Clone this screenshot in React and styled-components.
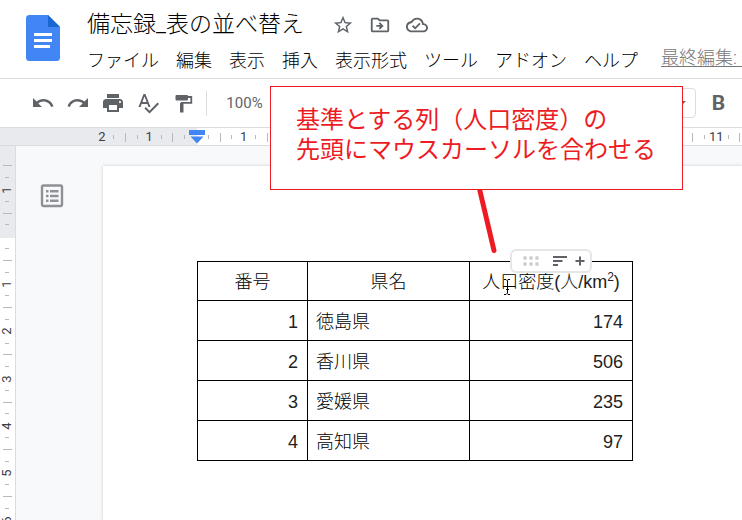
import React from "react";
import styled, { createGlobalStyle } from "styled-components";
import {
  MdUndo,
  MdRedo,
  MdPrint,
  MdSpellcheck,
  MdStarBorder,
  MdOutlineDriveFileMove,
  MdOutlineCloudDone,
  MdArrowDropDown,
} from "react-icons/md";

const colors = {
  text: "#000",
  icon: "#5f6368",
  line: "#dadce0",
  margin: "#e8eaed",
  canvas: "#f8f9fb",
  tick: "#b6b9be",
  blue: "#4285f4",
  red: "#ed1c24",
};

const fonts = {
  ui: `Roboto, "Noto Sans CJK JP", sans-serif`,
  doc: `"Liberation Sans", "Noto Sans CJK JP", sans-serif`,
};

const GlobalStyle = createGlobalStyle`
  * {
    box-sizing: border-box;
  }
  body {
    margin: 0;
    background: #fff;
    color: ${colors.text};
    font-family: ${fonts.ui};
    font-weight: 300;
  }
  button {
    padding: 0;
    border: 0;
    background: none;
    color: inherit;
    font: inherit;
    cursor: pointer;
  }
  svg {
    display: block;
    flex-shrink: 0;
  }
`;

const Container = styled.div`
  position: relative;
  display: flex;
  flex-direction: column;
  height: 100vh;
  overflow: hidden;
`;

const Header = styled.header`
  display: flex;
  flex-shrink: 0;
  gap: 27px;
  padding: 8px 0 0 26px;
  border-bottom: 1px solid ${colors.line};
`;

const LogoLink = styled.a`
  padding-top: 7px;
`;

const HeaderMain = styled.div`
  flex: 1;
  min-width: 0;
`;

const TitleRow = styled.div`
  display: flex;
  align-items: center;
  height: 34px;
`;

const Title = styled.h1`
  margin: 0 28px 0 0;
  font-size: 23px;
  font-weight: 300;
  line-height: 34px;
  white-space: nowrap;
`;

const TitleActions = styled.div`
  display: flex;
  align-items: center;
  gap: 15px;
  color: ${colors.icon};
`;

const MenuBar = styled.nav`
  display: flex;
  gap: 17px;
  height: 36px;
  padding-top: 1px;
  font-size: 18px;
  line-height: 36px;
  white-space: nowrap;
`;

const LastEdit = styled.a`
  margin-left: 6px;
  color: #777;
  line-height: 30px;
  text-underline-offset: 2px;
`;

const Toolbar = styled.div`
  display: flex;
  flex-shrink: 0;
  align-items: center;
  height: 49px;
  padding-left: 25px;
  border-bottom: 1px solid ${colors.line};
  color: ${colors.icon};
`;

const ToolButton = styled.button`
  display: flex;
  align-items: center;
  justify-content: center;
  width: 35px;
  height: 32px;
`;

const BoldButton = styled(ToolButton)`
  margin-left: 5px;
  font-size: 21px;
  font-weight: 700;
`;

const Separator = styled.div`
  width: 1px;
  height: 25px;
  margin: 0 18px 0 6px;
  background: ${colors.line};
`;

const ZoomButton = styled(ToolButton)`
  width: 39px;
  font-size: 15px;
  font-weight: 400;
`;

const FontBox = styled.div`
  display: flex;
  align-items: center;
  justify-content: flex-end;
  width: 401px;
  height: 30px;
  margin-left: 31px;
  padding-right: 2px;
  border: 1px solid ${colors.line};
  border-radius: 4px;
`;

const RulerBar = styled.div`
  flex-shrink: 0;
  height: 18px;
  padding-left: 96px;
  overflow: hidden;
  border-bottom: 1px solid ${colors.line};
  background: linear-gradient(90deg, ${colors.margin} 197px, #fff 197px);
`;

const RulerScale = styled.div`
  display: grid;
  grid-template-columns: repeat(160, 1fr);
  place-items: center;
  width: 1890px;
  height: 18px;
`;

const SideRuler = styled.div`
  flex-shrink: 0;
  width: 16px;
  padding: 14px 1px 0 0;
  overflow: hidden;
  border-right: 1px solid ${colors.line};
  background: linear-gradient(${colors.margin} 92px, #fff 92px);
`;

const SideScale = styled.div`
  display: grid;
  grid-template-rows: repeat(160, 1fr);
  place-items: center;
  height: 1890px;
`;

const Tick = styled.span`
  width: ${({ $side, $long }) => ($side ? ($long ? 9 : 4) : 1)}px;
  height: ${({ $side, $long }) => ($side ? 1 : $long ? 9 : 4)}px;
  background: ${colors.tick};
`;

const RulerLabel = styled.span`
  display: flex;
  align-items: center;
  justify-content: center;
  width: 12px;
  height: 12px;
  color: #3c4043;
  font-size: 13px;
  font-weight: 400;
  line-height: 12px;
  transform: ${({ $side }) => ($side ? "rotate(-90deg)" : "none")};
`;

const Workspace = styled.div`
  display: flex;
  flex: 1;
  min-height: 0;
`;

const Canvas = styled.main`
  display: flex;
  flex: 1;
  min-width: 0;
  padding-top: 20px;
  background: ${colors.canvas};
`;

const OutlineRail = styled.div`
  width: 87px;
  padding: 18px 0 0 24px;
`;

const Page = styled.article`
  flex: 1;
  min-width: 0;
  padding: 95px 0 0 94px;
  background: #fff;
  box-shadow: 0 0 3px rgba(60, 64, 67, 0.25);
`;

const DataTable = styled.table`
  width: 436px;
  border-collapse: collapse;
  table-layout: fixed;
  font-family: ${fonts.doc};
  font-size: 18px;
  line-height: 23px;
`;

const Col = styled.col`
  width: ${({ $width }) => $width}px;
`;

const Cell = styled.td`
  height: 40px;
  padding: 4px 8px 0;
  border: 1px solid #000;
  text-align: ${({ $align }) => $align || "left"};
  white-space: nowrap;
`;

const NumberCell = styled(Cell)`
  padding-right: 9px;
  color: #222;
`;

const HeadCell = styled(Cell)`
  position: relative;
  height: 39px;
  padding-top: 2px;
  font-weight: 300;
`;

const Unit = styled.span`
  color: #222;
`;

const Sup = styled.sup`
  font-size: 12px;
  line-height: 0;
`;

const ColumnTools = styled.div`
  position: absolute;
  top: -13px;
  left: 40px;
  display: flex;
  align-items: center;
  width: 82px;
  height: 24px;
  padding-left: 11px;
  border: 2px solid #e6e6e8;
  border-radius: 6px;
  background: #fff;
  color: ${colors.icon};
`;

const ColumnButton = styled.button`
  margin-right: ${({ $gap }) => $gap || 0}px;
`;

const TextCursor = styled.svg`
  position: absolute;
  top: 17px;
  left: 33px;
`;

const Callout = styled.aside`
  position: absolute;
  top: 86px;
  left: 270px;
  padding: 16px 26px 26px 25px;
  border: 1px solid ${colors.red};
  background: #fff;
`;

const CalloutText = styled.p`
  margin: 0;
  color: ${colors.red};
  font-family: "Noto Sans CJK JP", sans-serif;
  font-size: 24px;
  font-weight: 400;
  line-height: 30px;
  white-space: nowrap;
`;

const CalloutPointer = styled.svg`
  position: absolute;
  top: 100%;
  left: 204px;
`;

const menus = [
  "ファイル",
  "編集",
  "表示",
  "挿入",
  "表示形式",
  "ツール",
  "アドオン",
  "ヘルプ",
];

const rows = [
  { id: 1, name: "徳島県", density: 174 },
  { id: 2, name: "香川県", density: 506 },
  { id: 3, name: "愛媛県", density: 235 },
  { id: 4, name: "高知県", density: 97 },
];

const DocsLogo = () => (
  <svg width="34" height="46" viewBox="0 0 34 46">
    <path
      d="M3.500 0H22l12 12v30.500a3.500 3.500 0 0 1-3.500 3.500h-27A3.500 3.500 0 0 1 0 42.500v-39A3.500 3.500 0 0 1 3.500 0z"
      fill={colors.blue}
    />
    <path d="M22 0l12 12H22z" fill="#1967d2" />
    <path d="M8 18h18v3H8zM8 24h18v3H8zM8 30h16v3H8z" fill="#fff" />
  </svg>
);

const PaintIcon = () => (
  <svg width="24" height="24" viewBox="0 0 24 24">
    <rect x="4.500" y="4" width="12.500" height="5.500" rx="1" fill="currentColor" />
    <path
      d="M17 6h3.300v5.800h-9.500V21"
      fill="none"
      stroke="currentColor"
      strokeWidth="1.800"
    />
    <path d="M9 12h3.500v9.500H9z" fill="currentColor" />
  </svg>
);

const OutlineIcon = () => (
  <svg width="24" height="24" viewBox="0 0 24 24" fill="#8f9196">
    <rect
      x="2"
      y="1.500"
      width="20"
      height="20.500"
      rx="1.500"
      fill="none"
      stroke="#8f9196"
      strokeWidth="2.400"
    />
    <path d="M6 6h2.500v2.500H6zM10 6h8.500v2.500H10zM6 10.700h2.500v2.500H6zM10 10.700h8.500v2.500H10zM6 15.400h2.500v2.500H6zM10 15.400h8.500v2.500H10z" />
  </svg>
);

const DragDots = () => (
  <svg width="16" height="12" viewBox="0 0 16 12" fill="#cfcfd2">
    {[2, 8, 14].map((x) =>
      [3, 9].map((y) => <circle key={`${x}-${y}`} cx={x} cy={y} r="1.900" />)
    )}
  </svg>
);

const IndentMarker = () => (
  <svg width="16" height="14" viewBox="0 0 16 14" fill={colors.blue}>
    <path d="M0 0h16v5H0zM1.500 6.500h13L8 13.500z" />
  </svg>
);

// Four cells per centimetre: label, quarter tick, half tick, quarter tick.
const Scale = ({ side, offset, labelAt }) =>
  Array.from({ length: 160 }, (_, index) => {
    const step = (index + offset) % 4;
    if (step !== 0) {
      return <Tick key={index} $side={side} $long={step === 2} />;
    }
    return (
      <RulerLabel key={index} $side={side}>
        {labelAt((index + offset) / 4)}
      </RulerLabel>
    );
  });

export default function App() {
  return (
    <Container>
      <GlobalStyle />
      <Header>
        <LogoLink href="#home" aria-label="ドキュメント">
          <DocsLogo />
        </LogoLink>
        <HeaderMain>
          <TitleRow>
            <Title>備忘録_表の並べ替え</Title>
            <TitleActions>
              <button aria-label="スター">
                <MdStarBorder size={22} />
              </button>
              <button aria-label="移動">
                <MdOutlineDriveFileMove size={22} />
              </button>
              <button aria-label="保存状態">
                <MdOutlineCloudDone size={22} />
              </button>
            </TitleActions>
          </TitleRow>
          <MenuBar>
            {menus.map((menu) => (
              <button key={menu}>{menu}</button>
            ))}
            <LastEdit href="#history">最終編集: 数秒前</LastEdit>
          </MenuBar>
        </HeaderMain>
      </Header>

      <Toolbar>
        <ToolButton aria-label="元に戻す">
          <MdUndo size={24} />
        </ToolButton>
        <ToolButton aria-label="やり直し">
          <MdRedo size={24} />
        </ToolButton>
        <ToolButton aria-label="印刷">
          <MdPrint size={24} />
        </ToolButton>
        <ToolButton aria-label="スペルチェック">
          <MdSpellcheck size={24} />
        </ToolButton>
        <ToolButton aria-label="書式を貼り付け">
          <PaintIcon />
        </ToolButton>
        <Separator />
        <ZoomButton>100%</ZoomButton>
        <FontBox>
          <button aria-label="フォントサイズ">
            <MdArrowDropDown size={24} />
          </button>
        </FontBox>
        <BoldButton>B</BoldButton>
      </Toolbar>

      <RulerBar>
        <RulerScale>
          <Scale
            offset={0}
            labelAt={(n) => (n === 2 ? <IndentMarker /> : Math.abs(n - 2))}
          />
        </RulerScale>
      </RulerBar>

      <Workspace>
        <SideRuler>
          <SideScale>
            <Scale
              side
              offset={2}
              labelAt={(n) => (n === 2 ? null : Math.abs(n - 2))}
            />
          </SideScale>
        </SideRuler>
        <Canvas>
          <OutlineRail>
            <button aria-label="概要を表示">
              <OutlineIcon />
            </button>
          </OutlineRail>
          <Page>
            <DataTable>
              <colgroup>
                <Col $width={110} />
                <Col $width={162} />
                <Col $width={163} />
              </colgroup>
              <thead>
                <tr>
                  <HeadCell as="th" $align="center">
                    番号
                  </HeadCell>
                  <HeadCell as="th" $align="center">
                    県名
                  </HeadCell>
                  <HeadCell as="th" $align="center">
                    人口密度
                    <Unit>
                      (人/km<Sup>2</Sup>)
                    </Unit>
                    <ColumnTools>
                      <ColumnButton aria-label="列を移動" $gap={14}>
                        <DragDots />
                      </ColumnButton>
                      <ColumnButton aria-label="並べ替え" $gap={8}>
                        <svg width="14" height="10" viewBox="0 0 14 10">
                          <path
                            d="M0 1h14M0 5h9.500M0 9h5"
                            stroke="currentColor"
                            strokeWidth="1.800"
                          />
                        </svg>
                      </ColumnButton>
                      <ColumnButton aria-label="列を追加">
                        <svg width="10" height="10" viewBox="0 0 10 10">
                          <path
                            d="M0.500 5h9M5 0.500v9"
                            stroke="currentColor"
                            strokeWidth="2"
                          />
                        </svg>
                      </ColumnButton>
                    </ColumnTools>
                    <TextCursor width="8" height="16" viewBox="0 0 8 16">
                      <path
                        d="M1 0.500h2l1 1 1-1h2M1 15.500h2l1-1 1 1h2M4.500 1.500v13M3 10.500h3"
                        fill="none"
                        stroke="#000"
                      />
                    </TextCursor>
                  </HeadCell>
                </tr>
              </thead>
              <tbody>
                {rows.map(({ id, name, density }) => (
                  <tr key={id}>
                    <NumberCell $align="right">{id}</NumberCell>
                    <Cell>{name}</Cell>
                    <NumberCell $align="right">{density}</NumberCell>
                  </tr>
                ))}
              </tbody>
            </DataTable>
          </Page>
        </Canvas>
      </Workspace>

      <Callout>
        <CalloutText>
          基準とする列（人口密度）の
          <br />
          先頭にマウスカーソルを合わせる
        </CalloutText>
        <CalloutPointer width="24" height="66" viewBox="0 0 24 66">
          <path
            d="M4.500 0L19 61.500"
            stroke={colors.red}
            strokeWidth="5"
            strokeLinecap="round"
          />
        </CalloutPointer>
      </Callout>
    </Container>
  );
}
